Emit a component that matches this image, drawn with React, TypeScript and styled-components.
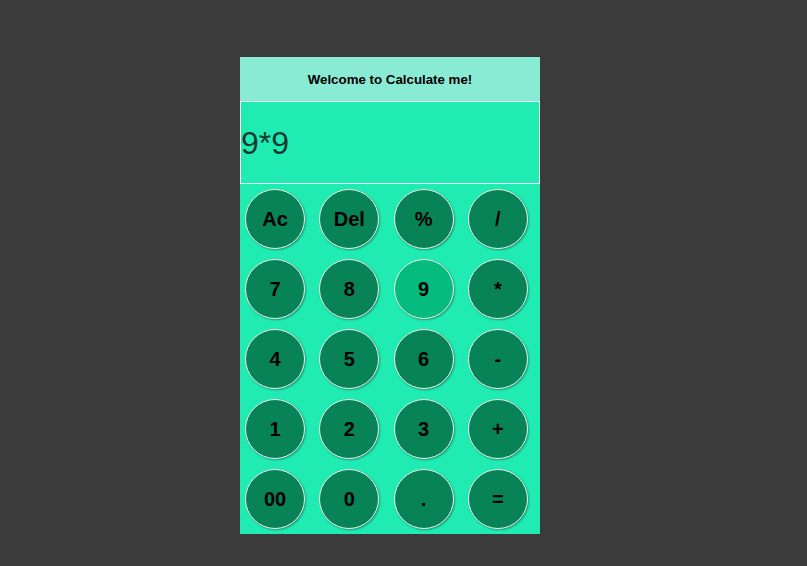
import styled, { createGlobalStyle } from "styled-components";

const GlobalStyle = createGlobalStyle`
  html, body {
    margin: 0;
    padding: 0;
    background: #3b3b3b;
  }
  body {
    font-family: "Liberation Sans", Arial, sans-serif;
  }
`;

const keys = [
  "Ac", "Del", "%", "/",
  "7", "8", "9", "*",
  "4", "5", "6", "-",
  "1", "2", "3", "+",
  "00", "0", ".", "=",
];

const App = () => {
  return (
    <>
      <GlobalStyle />
      <Page>
        <Calculator>
          <Header>Welcome to Calculate me!</Header>
          <Display>9*9</Display>
          <Keypad>
            {keys.map((k) => (
              <Key key={k} $active={k === "9"}>
                {k}
              </Key>
            ))}
          </Keypad>
        </Calculator>
      </Page>
    </>
  );
};

export default App;

const Page = styled.div`
  width: 807px;
  height: 566px;
  display: flex;
  box-sizing: border-box;
  padding: 57px 0 0 240px;
`;

const Calculator = styled.div`
  width: 300px;
  height: 477px;
  background: #20ebb3;
  display: flex;
  flex-direction: column;
`;

const Header = styled.div`
  height: 44px;
  background: #89ebd3;
  display: flex;
  align-items: center;
  justify-content: center;
  font-size: 13.3px;
  font-weight: bold;
  color: #000;
`;

const Display = styled.div`
  height: 83px;
  box-sizing: border-box;
  border: 1px solid #e6f5ec;
  display: flex;
  align-items: center;
  font-size: 32px;
  color: #1a3a30;
  padding-top: 1px;
`;

const Keypad = styled.div`
  display: grid;
  grid-template-columns: repeat(4, 60px);
  grid-auto-rows: 60px;
  column-gap: 14.3px;
  row-gap: 10px;
  padding: 5px 0 0 5px;
`;

const Key = styled.button<{ $active?: boolean }>`
  width: 60px;
  height: 60px;
  border-radius: 50%;
  border: 1px solid #f2f2e6;
  background: ${(p) => (p.$active ? "#05bb7d" : "#078357")};
  box-shadow: 1px 1px 2px rgba(0, 0, 0, 0.35);
  font-family: "Liberation Sans", Arial, sans-serif;
  font-size: 20px;
  font-weight: bold;
  color: #000;
  padding: 0;
  cursor: pointer;
`;
